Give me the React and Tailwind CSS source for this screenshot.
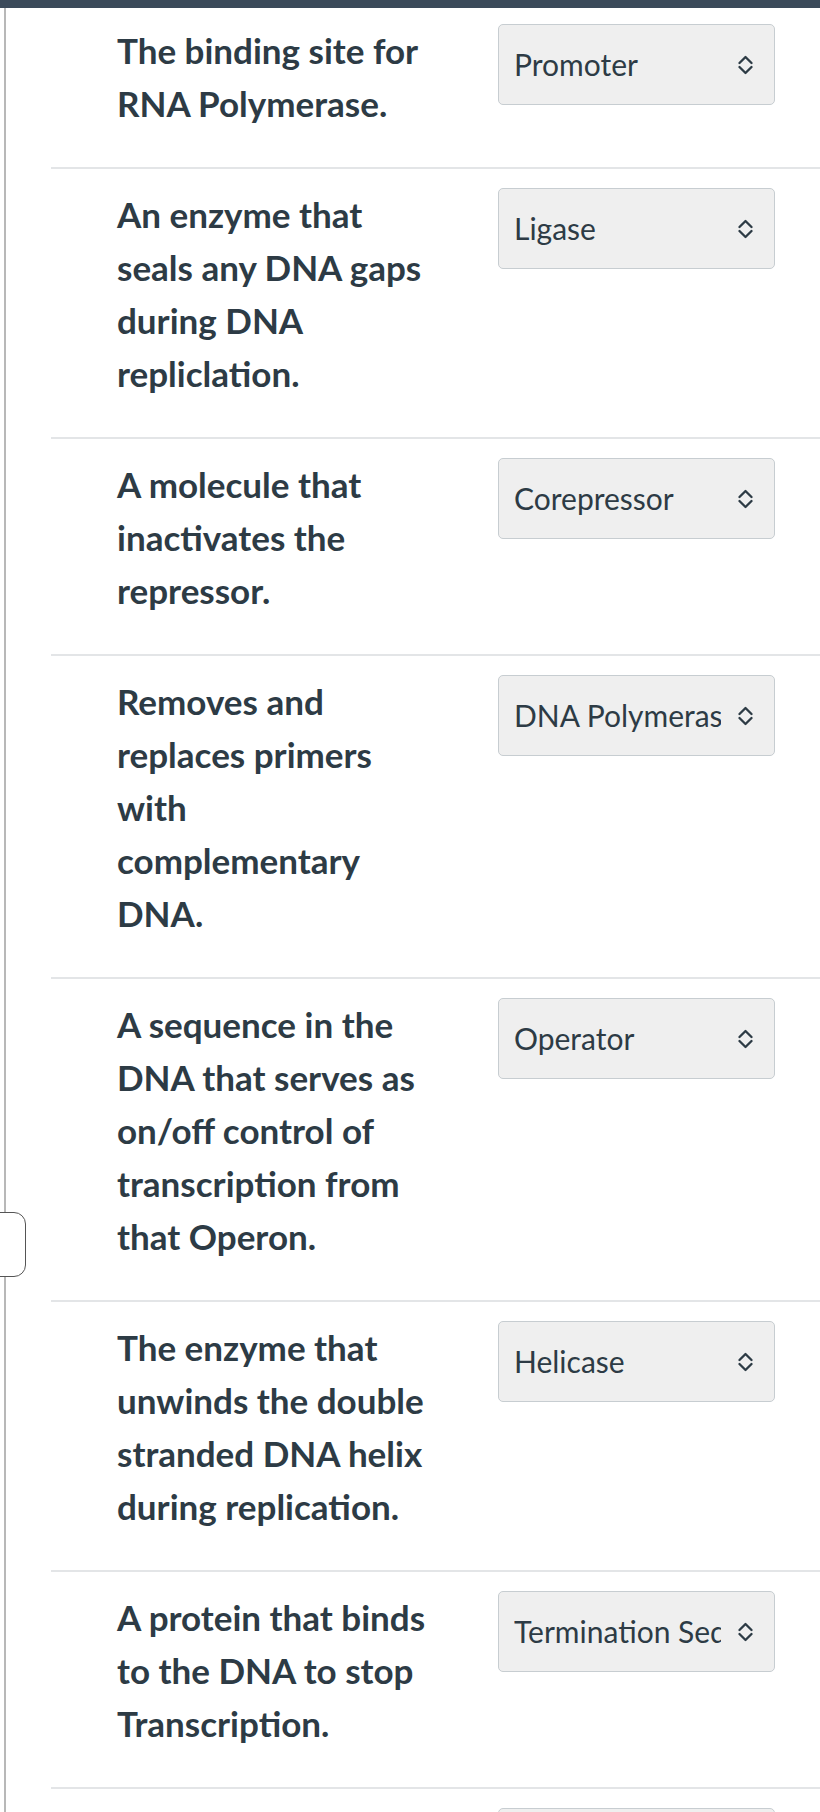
import React from "react";

const items = [
  { label: "The binding site for RNA Polymerase.", value: "Promoter" },
  { label: "An enzyme that seals any DNA gaps during DNA repliclation.", value: "Ligase" },
  { label: "A molecule that inactivates the repressor.", value: "Corepressor" },
  { label: "Removes and replaces primers with complementary DNA.", value: "DNA Polymerase" },
  { label: "A sequence in the DNA that serves as on/off control of transcription from that Operon.", value: "Operator" },
  { label: "The enzyme that unwinds the double stranded DNA helix during replication.", value: "Helicase" },
  { label: "A protein that binds to the DNA to stop Transcription.", value: "Termination Sequence" },
];

function Chevrons() {
  return (
    <svg width="15" height="20" viewBox="0 0 15 20" fill="none" stroke="#2d3b45" strokeWidth="2.3" strokeLinecap="round" strokeLinejoin="round">
      <path d="M1.5 8 L7.5 2 L13.5 8" />
      <path d="M1.5 12 L7.5 18 L13.5 12" />
    </svg>
  );
}

function FakeSelect({ value }) {
  return (
    <div className="w-[277px] h-[81px] shrink-0 flex items-center rounded-[5px] border border-[#c7cdd1] bg-[#efefef] pl-[15px] pr-[21px]">
      <div className="w-[207px] overflow-hidden whitespace-nowrap text-[30px] text-[#2d3b45]">{value}</div>
      <div className="ml-auto flex items-center">
        <Chevrons />
      </div>
    </div>
  );
}

function Row({ label, value, first }) {
  return (
    <div className={`flex items-start border-b-2 border-[#e3e5e7] pl-[66px] pb-[37px] ${first ? "pt-[16px]" : "pt-[19px]"}`}>
      <div className="w-[314px] shrink-0 text-[35px] leading-[53px] font-bold text-[#2d3b45]">{label}</div>
      <div className="ml-[67px]">
        <FakeSelect value={value} />
      </div>
    </div>
  );
}

export default function App() {
  return (
    <div className="relative h-[1812px] overflow-hidden bg-white" style={{ fontFamily: "Lato, 'Open Sans', sans-serif" }}>
      <div className="h-[8px] bg-[#3b4a5a]" />
      <div className="flex h-full">
        <div className="w-[4px] shrink-0" />
        <div className="w-[2px] shrink-0 bg-[#b8b8b8]" />
        <div className="flex-1 pl-[45px]">
          {items.map((it, i) => (
            <Row key={i} label={it.label} value={it.value} first={i === 0} />
          ))}
          <div className="flex items-start pl-[66px] pt-[19px]">
            <div className="w-[314px] shrink-0" />
            <div className="ml-[67px]">
              <div className="w-[277px] h-[81px] rounded-[5px] border border-[#c7cdd1] bg-[#efefef]" />
            </div>
          </div>
        </div>
      </div>
      {/* side handle */}
      <div className="absolute left-[-22px] top-[1212px] w-[48px] h-[65px] rounded-[12px] border-[1.5px] border-[#555] bg-white" />
    </div>
  );
}
